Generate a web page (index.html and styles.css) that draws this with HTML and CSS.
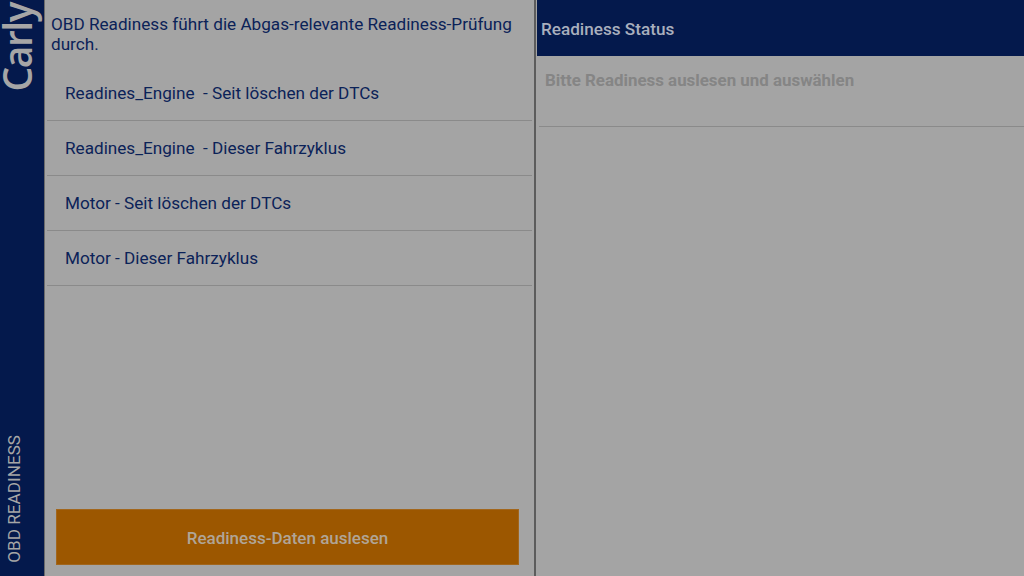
FILE: index.html
```html
<!DOCTYPE html>
<html lang="de">

<head>
    <meta charset="UTF-8">
    <title>OBD Readiness</title>
    <link rel="stylesheet" href="styles.css">
</head>

<body>
    <div class="container">
        <div class="sidebar">
            <div class="logo">Carly</div>
            <div class="section-name">OBD READINESS</div>
        </div>
        <div class="left-panel">
            <div class="intro">OBD Readiness führt die Abgas-relevante Readiness-Prüfung durch.</div>
            <div class="list">
                <div class="list-item">Readines_Engine&nbsp; - Seit löschen der DTCs</div>
                <div class="list-item">Readines_Engine&nbsp; - Dieser Fahrzyklus</div>
                <div class="list-item">Motor - Seit löschen der DTCs</div>
                <div class="list-item">Motor - Dieser Fahrzyklus</div>
            </div>
            <div class="read-btn">Readiness-Daten auslesen</div>
        </div>
        <div class="right-panel">
            <div class="status-header">Readiness Status</div>
            <div class="status-empty">Bitte Readiness auslesen und auswählen</div>
        </div>
    </div>
</body>

</html>
```

FILE: styles.css
```css
body {
    margin: 0;
    padding: 0;
}

.container {
    width: 1024px;
    height: 576px;
    display: flex;
    overflow: hidden;
    background-color: #a4a4a4;
    font-family: Roboto, sans-serif;
}

.sidebar {
    width: 44px;
    flex-shrink: 0;
    box-sizing: border-box;
    padding: 3px 0 13px;
    display: flex;
    flex-direction: column;
    justify-content: space-between;
    background-color: #04194c;
}

.logo,
.section-name {
    writing-mode: vertical-rl;
    transform: rotate(180deg);
    color: #a6a6a6;
}

.logo {
    margin-left: 1px;
    font-family: "Open Sans", sans-serif;
    font-size: 39px;
    font-weight: 600;
    line-height: 32px;
    letter-spacing: -1.5px;
}

.section-name {
    margin-left: 4px;
    font-size: 17.15px;
    line-height: 20px;
}

.left-panel {
    width: 492px;
    flex-shrink: 0;
    box-sizing: border-box;
    padding: 14px 0 11px 1px;
    display: flex;
    flex-direction: column;
    border-left: 1px solid #6b6b6b;
    border-right: 2px solid #5c5c5c;
}

.intro {
    padding: 0 16px 0 5px;
    font-size: 17.15px;
    line-height: 20px;
    color: #0b2258;
}

.list {
    flex: 1;
    margin: 12px 2px 0 1px;
}

.list-item {
    height: 54px;
    padding-left: 18px;
    display: flex;
    align-items: center;
    font-size: 17.15px;
    color: #0b2258;
    border-bottom: 1px solid #8a8a8a;
}

.read-btn {
    width: 463px;
    height: 56px;
    margin-left: 10px;
    box-sizing: border-box;
    padding-top: 1px;
    display: flex;
    align-items: center;
    justify-content: center;
    font-size: 17px;
    font-weight: 500;
    color: #b0a597;
    background-color: #9c5700;
    border: 1px solid #a2661c;
}

.right-panel {
    flex: 1;
    padding-left: 1px;
}

.status-header {
    height: 56px;
    box-sizing: border-box;
    padding: 1px 0 0 4px;
    display: flex;
    align-items: center;
    font-size: 17.15px;
    font-weight: 500;
    color: #a9afbd;
    background-color: #04194c;
}

.status-empty {
    height: 71px;
    box-sizing: border-box;
    margin-left: 2px;
    padding: 14px 0 0 6px;
    font-size: 16.9px;
    font-weight: 700;
    color: #858585;
    border-bottom: 1px solid #8a8a8a;
}
```
